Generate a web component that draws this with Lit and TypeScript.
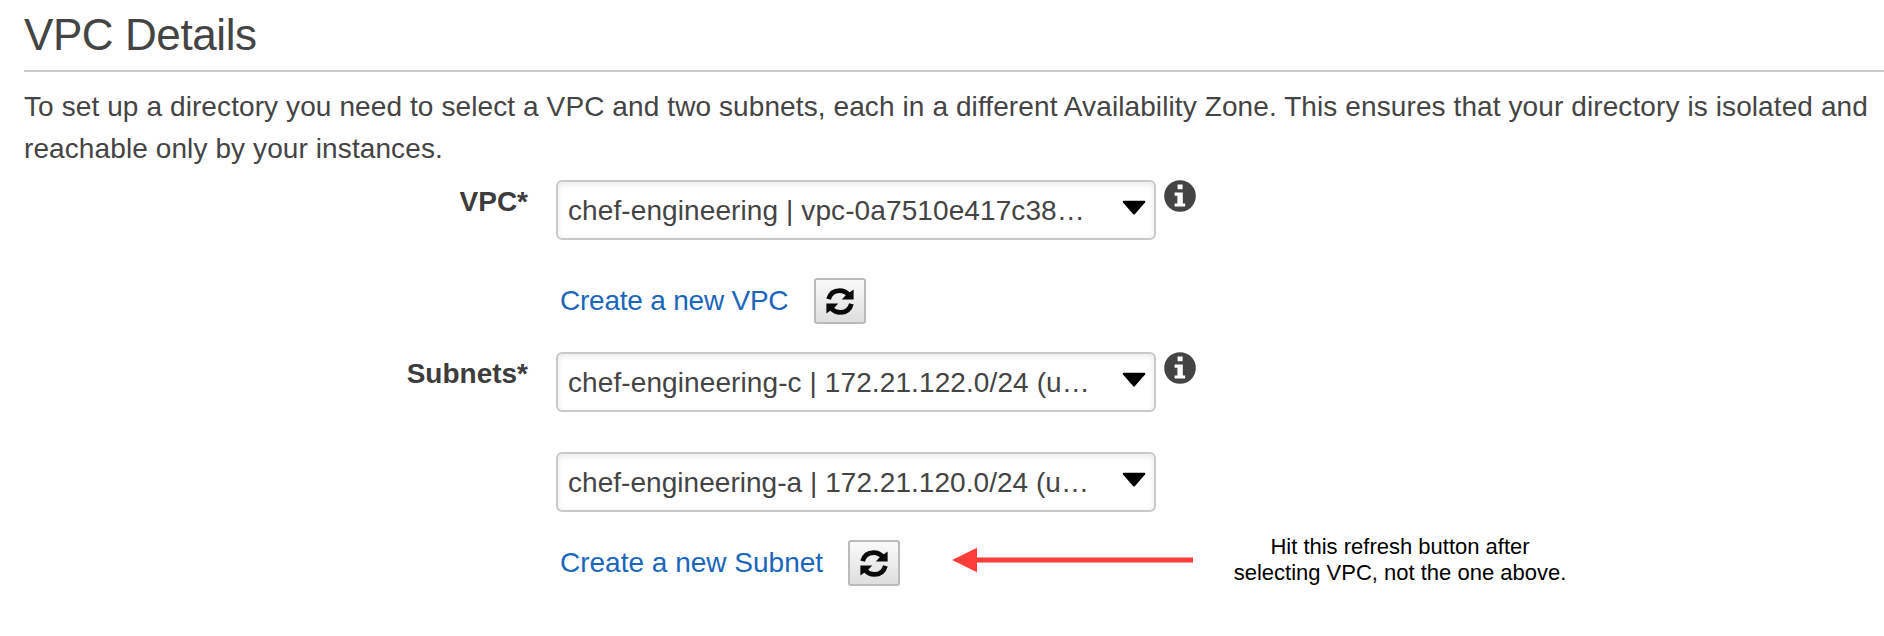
import { LitElement, html, css } from "lit";
import { customElement } from "lit/decorators.js";

@customElement("vpc-select")
class VpcSelect extends LitElement {
  static styles = css`
    :host { display: block; width: 600px; height: 60px; }
    .box {
      box-sizing: border-box; width: 600px; height: 60px;
      border: 2px solid #c9c9c9; border-radius: 6px; background: #fff;
      box-shadow: inset 0 2px 6px rgba(0, 0, 0, 0.09);
      display: flex; justify-content: space-between; align-items: flex-start;
      padding: 0 8px 0 10px;
    }
    .text { line-height: 32px; padding-top: 13px; white-space: pre; }
    .caret { display: block; margin-top: 18px; }
  `;
  render() {
    return html`<div class="box">
      <span class="text"><slot></slot></span>
      <svg class="caret" width="24" height="15" viewBox="0 0 24 15">
        <path d="M1.6 .8H22.4Q24 1.1 23 2.5L13 13.9Q12 14.9 11 13.9L1 2.5Q0 1.1 1.6 .8Z" fill="#000" />
      </svg>
    </div>`;
  }
}

@customElement("refresh-button")
class RefreshButton extends LitElement {
  static styles = css`
    :host { display: block; flex: none; }
    .btn {
      box-sizing: border-box; width: 52px; height: 46px; padding: 0;
      border: 2px solid #bbb; border-radius: 3px;
      background: linear-gradient(#fafafa, #dedede);
      display: flex; align-items: center; justify-content: center;
    }
    svg { display: block; }
  `;
  render() {
    return html`<button class="btn" aria-label="Refresh">
      <svg width="30" height="30" viewBox="0 0 30 30">
        <g fill="none" stroke="#0a0a0a" stroke-width="4.8">
          <path d="M3.6 13.2C5 8 9 4.6 14.6 4.6C18.4 4.6 21.4 6 24 9" />
          <path d="M26.4 17.8C25 23 21 26.4 15.4 26.4C11.6 26.4 8.6 25 6 22" />
        </g>
        <path d="M28.6 3.6V13.6H16.8L21 9Z" fill="#0a0a0a" />
        <path d="M1.4 27.4V17.4H13.2L9 22Z" fill="#0a0a0a" />
      </svg>
    </button>`;
  }
}

@customElement("info-icon")
class InfoIcon extends LitElement {
  static styles = css`:host, svg { display: block; }`;
  render() {
    return html`<svg width="32" height="32" viewBox="0 0 32 32">
      <circle cx="16" cy="16" r="15.8" fill="#444" />
      <path d="M13.6 4.6H18.6V9.2H13.6ZM10.6 12.6H18.8V23.4H21.2V26.4H10.6V23.4H13.4V15.8H10.6Z" fill="#fff" />
    </svg>`;
  }
}

@customElement("app-root")
class AppRoot extends LitElement {
  static styles = css`
    :host {
      display: block; height: 636px; overflow: hidden; background: #fff; color: #444;
      font-family: "Liberation Sans", Arial, sans-serif; font-size: 28px;
    }
    .page { padding-left: 24px; }
    .title {
      margin: 0; height: 70px; border-bottom: 2px solid #ccc; box-sizing: content-box;
      font-size: 44px; font-weight: 400; line-height: 50px; letter-spacing: -0.42px;
    }
    .title span { display: block; padding-top: 10px; }
    .intro { margin: 0; padding-top: 14px; line-height: 42px; white-space: nowrap; letter-spacing: 0.1px; }
    .form { display: grid; grid-template-columns: 504px 600px auto; column-gap: 28px; margin-top: 10px; }
    .label { text-align: right; font-weight: 700; line-height: 32px; padding-top: 6px; color: #3c3c3c; }
    .fields { display: flex; flex-direction: column; }
    .info { margin-left: -20px; }
    .linkrow { display: flex; align-items: flex-start; padding-left: 4px; }
    .first { margin-top: 38px; height: 74px; }
    .gap { margin-top: 40px; }
    .last { margin-top: 28px; }
    .wide { letter-spacing: 0.1px; }
    .slight { letter-spacing: 0.04px; }
    .link { flex: none; color: #1a66bb; text-decoration: none; line-height: 32px; padding-top: 7px; white-space: nowrap; }
    .vpc { width: 254px; letter-spacing: -0.22px; }
    .sub { width: 288px; }
    .arrow { display: block; flex: none; margin: 7px 0 0 52px; }
    .note {
      flex: none; width: 340px; margin-left: 37px; text-align: center; color: #000;
      font-size: 22px; line-height: 26px; white-space: nowrap; margin-top: -6px;
    }
  `;
  render() {
    return html`<main class="page">
      <h1 class="title"><span>VPC Details</span></h1>
      <p class="intro">To set up a directory you need to select a VPC and two subnets, each in a different Availability Zone. This ensures that your directory is isolated and<br />reachable only by your instances.</p>
      <div class="form">
        <div class="label">VPC*</div>
        <div class="fields">
          <vpc-select class="wide">chef-engineering | vpc-0a7510e417c38…</vpc-select>
          <div class="linkrow first">
            <a class="link vpc">Create a new VPC</a>
            <refresh-button></refresh-button>
          </div>
        </div>
        <info-icon class="info"></info-icon>
        <div class="label">Subnets*</div>
        <div class="fields">
          <vpc-select class="wide">chef-engineering-c | 172.21.122.0/24 (u…</vpc-select>
          <vpc-select class="gap slight">chef-engineering-a | 172.21.120.0/24 (u…</vpc-select>
          <div class="linkrow last">
            <a class="link sub">Create a new Subnet</a>
            <refresh-button></refresh-button>
            <svg class="arrow" width="241" height="26" viewBox="0 0 241 26">
              <path d="M0 13L25 .7V10.6H241V15.6H25V25.3Z" fill="#ff3d3a" />
            </svg>
            <div class="note">Hit this refresh button after<br />selecting VPC, not the one above.</div>
          </div>
        </div>
        <info-icon class="info"></info-icon>
      </div>
    </main>`;
  }
}
